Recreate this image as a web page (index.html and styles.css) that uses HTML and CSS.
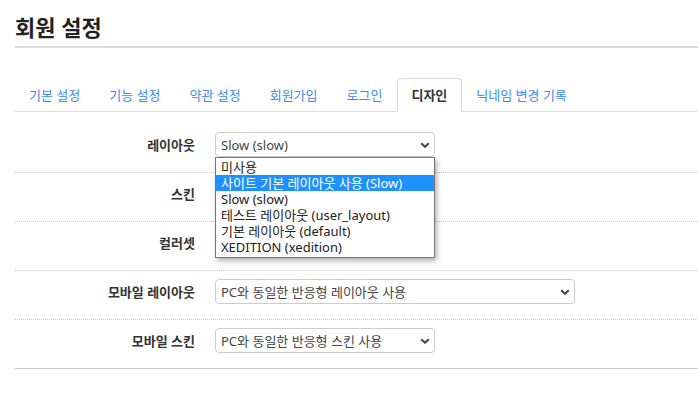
FILE: index.html
```html
<!DOCTYPE html>
<html lang="ko">
<head>
<meta charset="utf-8">
<title>회원 설정</title>
<link rel="stylesheet" href="styles.css">
</head>
<body>
<div class="page">
  <h1 class="title">회원 설정</h1>
  <ul class="tabs">
    <li><a class="tab" href="#">기본 설정</a></li>
    <li><a class="tab" href="#">기능 설정</a></li>
    <li><a class="tab" href="#">약관 설정</a></li>
    <li><a class="tab" href="#">회원가입</a></li>
    <li><a class="tab" href="#">로그인</a></li>
    <li><a class="tab active" href="#">디자인</a></li>
    <li><a class="tab" href="#">닉네임 변경 기록</a></li>
  </ul>
  <div class="form">
    <div class="row">
      <label class="label">레이아웃</label>
      <div class="field">
        <span class="select-wrap w220">
          <select class="select"><option>Slow (slow)</option></select>
          <svg class="chev" viewBox="0 0 10 6" width="10" height="6"><path d="M1.2 1.2 L5 4.8 L8.8 1.2" fill="none" stroke="#444" stroke-width="2"/></svg>
          <div class="dropdown">
            <div class="opt">미사용</div>
            <div class="opt sel">사이트 기본 레이아웃 사용 (Slow)</div>
            <div class="opt">Slow (slow)</div>
            <div class="opt">테스트 레이아웃 (user_layout)</div>
            <div class="opt">기본 레이아웃 (default)</div>
            <div class="opt">XEDITION (xedition)</div>
          </div>
        </span>
      </div>
    </div>
    <div class="row">
      <label class="label">스킨</label>
      <div class="field">
        <span class="select-wrap w220">
          <select class="select"><option></option></select>
        </span>
      </div>
    </div>
    <div class="row">
      <label class="label">컬러셋</label>
      <div class="field">
        <span class="select-wrap w220">
          <select class="select"><option></option></select>
        </span>
      </div>
    </div>
    <div class="row">
      <label class="label">모바일 레이아웃</label>
      <div class="field">
        <span class="select-wrap w360">
          <select class="select"><option>PC와 동일한 반응형 레이아웃 사용</option></select>
          <svg class="chev" viewBox="0 0 10 6" width="10" height="6"><path d="M1.2 1.2 L5 4.8 L8.8 1.2" fill="none" stroke="#444" stroke-width="2"/></svg>
        </span>
      </div>
    </div>
    <div class="row last">
      <label class="label">모바일 스킨</label>
      <div class="field">
        <span class="select-wrap w220">
          <select class="select"><option>PC와 동일한 반응형 스킨 사용</option></select>
          <svg class="chev" viewBox="0 0 10 6" width="10" height="6"><path d="M1.2 1.2 L5 4.8 L8.8 1.2" fill="none" stroke="#444" stroke-width="2"/></svg>
        </span>
      </div>
    </div>
  </div>
</div>
</body>
</html>
```

FILE: styles.css
```css
* { box-sizing: border-box; }
html, body { margin: 0; padding: 0; background: #fff; }
body {
  font-family: "Noto Sans", "Noto Sans CJK KR", sans-serif;
  font-size: 13px;
  color: #333;
}
.page { padding-left: 15px; }

.title {
  margin: 0;
  padding: 12px 0 3px;
  line-height: 31px;
  font-size: 22px;
  font-weight: 700;
  color: #222;
  border-bottom: 2px solid #ddd;
}

.tabs {
  list-style: none;
  margin: 30px 0 0;
  padding: 0;
  display: flex;
  align-items: flex-end;
  border-bottom: 1px solid #ddd;
}
.tab {
  display: block;
  position: relative;
  margin-bottom: -1px;
  padding: 7px 14px 8px 13px;
  line-height: 18px;
  border: 1px solid transparent;
  border-bottom: 0;
  border-radius: 4px 4px 0 0;
  color: #3d8af7;
  text-decoration: none;
}
.tab.active {
  background: #fff;
  border-color: #ddd;
  color: #333;
  font-weight: 700;
}

.form { margin-top: 12px; }
.row {
  display: grid;
  grid-template-columns: 200px auto;
  align-items: center;
  padding: 8px 0 15px;
  border-bottom: 1px dotted #c8c8c8;
}
.row.last { border-bottom: 1px solid #ccc; }
.label {
  text-align: right;
  padding-right: 20px;
  font-weight: 700;
  color: #333;
}
.field { display: flex; }

.select-wrap {
  position: relative;
  display: block;
  height: 25px;
}
.w220 { width: 220px; }
.w360 { width: 360px; }
.select {
  appearance: none;
  -webkit-appearance: none;
  width: 100%;
  height: 25px;
  margin: 0;
  padding: 0 20px 0 5px;
  border: 1px solid #ccc;
  border-radius: 4px;
  background: #fff;
  font-family: inherit;
  font-size: 13px;
  color: #444;
}
.chev {
  position: absolute;
  right: 5px;
  top: 10px;
  pointer-events: none;
}

.dropdown {
  position: absolute;
  z-index: 10;
  top: 25px;
  left: 0;
  width: 220px;
  padding: 1px 0 2px;
  background: #fff;
  border: 1px solid #767676;
  box-shadow: 2px 3px 5px rgba(0, 0, 0, 0.3);
}
.opt {
  height: 16px;
  line-height: 16px;
  padding: 0 5px;
  white-space: nowrap;
  color: #222;
}
.opt.sel { background: #1e90ff; color: #fff; }
```
